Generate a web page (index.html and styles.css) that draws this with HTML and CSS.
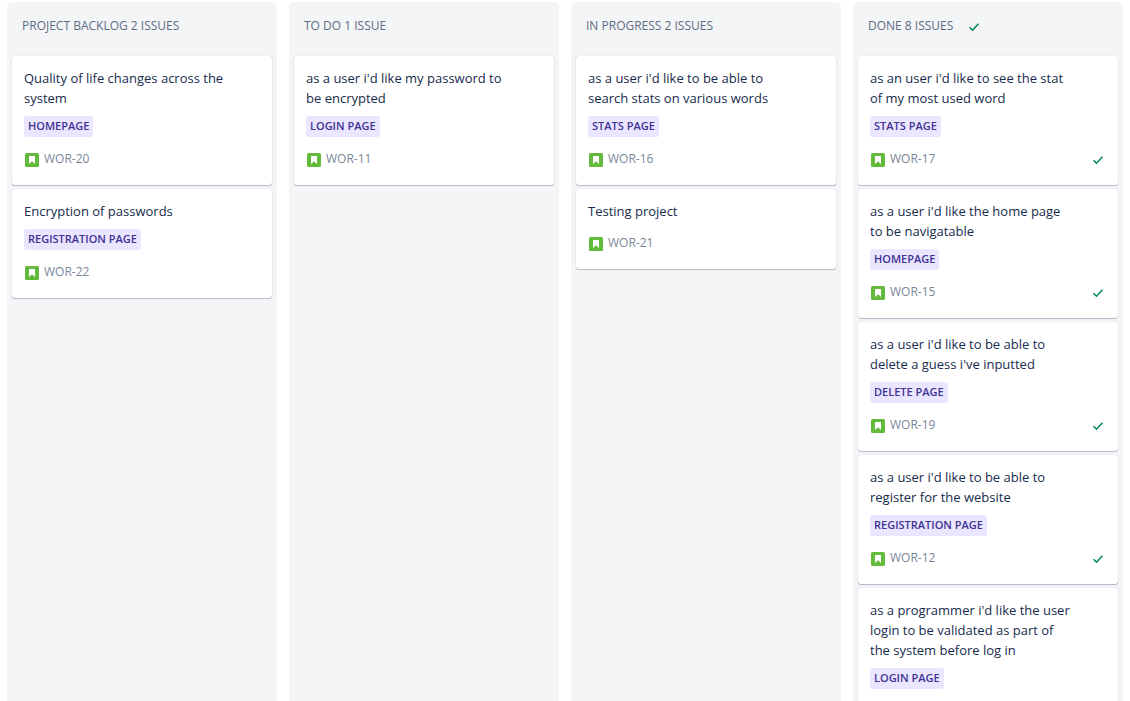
FILE: index.html
```html
<!DOCTYPE html>
<html lang="en">
<head>
<meta charset="utf-8">
<meta name="viewport" content="width=device-width, initial-scale=1">
<title>Board</title>
<link rel="stylesheet" href="styles.css">
</head>
<body>
<svg class="sprite" aria-hidden="true">
  <symbol id="story" viewBox="0 0 14 14"><rect width="14" height="14" rx="1.5" fill="#63ba3c"/><path d="M4 3.5a.5.5 0 0 1 .5-.5h5a.5.5 0 0 1 .5.5V11L7 8.3 4 11z" fill="#fff"/></symbol>
  <symbol id="check" viewBox="0 0 12 10"><path d="M1.5 5.2 4.5 8.2 10.5 1.8" fill="none" stroke="#00875a" stroke-width="1.5"/></symbol>
</svg>
<main class="board">
  <section class="column">
    <h2 class="column-title">PROJECT BACKLOG 2 ISSUES</h2>
    <ul class="cards">
      <li class="card">
        <p class="summary">Quality of life changes across the system</p>
        <span class="epic">HOMEPAGE</span>
        <div class="meta"><svg class="story"><use href="#story"/></svg><a class="key" href="#WOR-20">WOR-20</a></div>
      </li>
      <li class="card">
        <p class="summary">Encryption of passwords</p>
        <span class="epic">REGISTRATION PAGE</span>
        <div class="meta"><svg class="story"><use href="#story"/></svg><a class="key" href="#WOR-22">WOR-22</a></div>
      </li>
    </ul>
  </section>
  <section class="column">
    <h2 class="column-title">TO DO 1 ISSUE</h2>
    <ul class="cards">
      <li class="card">
        <p class="summary">as a user i'd like my password to be encrypted</p>
        <span class="epic">LOGIN PAGE</span>
        <div class="meta"><svg class="story"><use href="#story"/></svg><a class="key" href="#WOR-11">WOR-11</a></div>
      </li>
    </ul>
  </section>
  <section class="column">
    <h2 class="column-title">IN PROGRESS 2 ISSUES</h2>
    <ul class="cards">
      <li class="card">
        <p class="summary">as a user i'd like to be able to search stats on various words</p>
        <span class="epic">STATS PAGE</span>
        <div class="meta"><svg class="story"><use href="#story"/></svg><a class="key" href="#WOR-16">WOR-16</a></div>
      </li>
      <li class="card">
        <p class="summary">Testing project</p>
        <div class="meta"><svg class="story"><use href="#story"/></svg><a class="key" href="#WOR-21">WOR-21</a></div>
      </li>
    </ul>
  </section>
  <section class="column">
    <h2 class="column-title">DONE 8 ISSUES <svg class="check"><use href="#check"/></svg></h2>
    <ul class="cards">
      <li class="card">
        <p class="summary">as an user i'd like to see the stat of my most used word</p>
        <span class="epic">STATS PAGE</span>
        <div class="meta"><svg class="story"><use href="#story"/></svg><a class="key" href="#WOR-17">WOR-17</a><svg class="check"><use href="#check"/></svg></div>
      </li>
      <li class="card">
        <p class="summary">as a user i'd like the home page to be navigatable</p>
        <span class="epic">HOMEPAGE</span>
        <div class="meta"><svg class="story"><use href="#story"/></svg><a class="key" href="#WOR-15">WOR-15</a><svg class="check"><use href="#check"/></svg></div>
      </li>
      <li class="card">
        <p class="summary">as a user i'd like to be able to delete a guess i've inputted</p>
        <span class="epic">DELETE PAGE</span>
        <div class="meta"><svg class="story"><use href="#story"/></svg><a class="key" href="#WOR-19">WOR-19</a><svg class="check"><use href="#check"/></svg></div>
      </li>
      <li class="card">
        <p class="summary">as a user i'd like to be able to register for the website</p>
        <span class="epic">REGISTRATION PAGE</span>
        <div class="meta"><svg class="story"><use href="#story"/></svg><a class="key" href="#WOR-12">WOR-12</a><svg class="check"><use href="#check"/></svg></div>
      </li>
      <li class="card">
        <p class="summary">as a programmer i'd like the user login to be validated as part of the system before log in</p>
        <span class="epic">LOGIN PAGE</span>
      </li>
    </ul>
  </section>
</main>
</body>
</html>
```

FILE: styles.css
```css
* {
  box-sizing: border-box;
}

body {
  margin: 0;
  background: #fff;
  color: #172b4d;
  font: 13px/20px "Segoe UI", "Open Sans", "Noto Sans", sans-serif;
}

.sprite {
  display: none;
}

.board {
  display: grid;
  grid-template-columns: repeat(4, minmax(0, 1fr));
  gap: 12px;
  height: 100vh;
  padding: 2px 7px 0;
  overflow: hidden;
}

.column {
  padding: 0 5px;
  background: #f4f5f7;
  border-radius: 5px 5px 0 0;
}

.column-title {
  display: flex;
  align-items: center;
  gap: 15px;
  margin: 0;
  padding: 14px 10px 20px;
  color: #5e6c84;
  font-size: 12px;
  font-weight: 500;
  line-height: 20px;
}

.cards {
  display: flex;
  flex-direction: column;
  gap: 4px;
  margin: 0;
  padding: 0;
  list-style: none;
}

.card {
  padding: 12px 12px 16px;
  background: #fff;
  border-radius: 3px;
  box-shadow: 0 1px 1px rgba(9, 30, 66, 0.25), 0 0 1px rgba(9, 30, 66, 0.25);
}

.summary {
  margin: 0;
  padding-right: 32px;
}

.epic {
  display: block;
  width: fit-content;
  margin-top: 8px;
  padding: 0 4px 2px;
  background: #eae6ff;
  border-radius: 3px;
  color: #403294;
  font-size: 11px;
  font-weight: 600;
  line-height: 19px;
}

.meta {
  display: flex;
  align-items: center;
  gap: 5px;
  margin-top: 12px;
  padding: 0 2px 0 1px;
}

.story {
  width: 14px;
  height: 14px;
  margin-top: 2px;
}

.check {
  width: 12px;
  height: 10px;
  margin-top: 1px;
}

.meta .check {
  margin-left: auto;
}

.key {
  color: #7a869a;
  font-size: 12px;
  font-weight: 500;
  text-decoration: none;
}
```
